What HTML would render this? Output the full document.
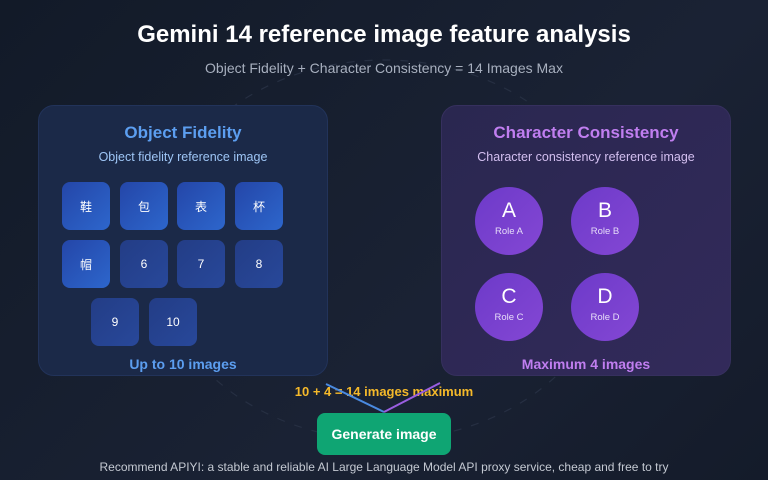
<!DOCTYPE html>
<html><head><meta charset="utf-8"><style>
*{margin:0;padding:0;box-sizing:border-box}
body{width:768px;height:480px;overflow:hidden;background:linear-gradient(135deg,#121a28,#1a2234 60%,#141b2a);font-family:"Liberation Sans","Noto Sans CJK SC",sans-serif;position:relative;color:#fff}
.a{position:absolute}
.t{left:0;width:768px;text-align:center}
.card{position:absolute;top:105px;width:290px;height:271px;border-radius:16px}
.sq{position:absolute;width:48px;height:48px;border-radius:8px;display:flex;align-items:center;justify-content:center;font-size:12px;color:#fff}
.f{background:linear-gradient(135deg,#2446a8,#2d66cc)}
.e{background:linear-gradient(135deg,#233d86,#28489a)}
.c{position:absolute;width:68px;height:68px;border-radius:50%;background:linear-gradient(135deg,#6d3ac9,#8447d4);text-align:center;color:#fff}
.c b{display:block;font-weight:normal;font-size:21px;margin-top:12px}
.c i{display:block;font-style:normal;font-size:9.5px;color:#e6dcf8;margin-top:3px}
</style></head><body>
<svg class="a" style="left:0;top:0" width="768" height="480">
<ellipse cx="384" cy="250" rx="230" ry="190" fill="none" stroke="#262f42" stroke-width="1.2" stroke-dasharray="8 10"/>
</svg>
<div class="card" style="left:38px;background:#1b2948;border:1px solid #22335a"></div>
<div class="card" style="left:441px;background:linear-gradient(135deg,#2a2750,#322a5a);border:1px solid #36305e"></div>
<div class="a t" style="top:21px;font-size:24px;font-weight:bold">Gemini 14 reference image feature analysis</div>
<div class="a t" style="top:60px;font-size:14px;color:#a8b0bf">Object Fidelity + Character Consistency = 14 Images Max</div>
<div class="a" style="left:38px;width:290px;text-align:center;top:123px;font-size:17px;font-weight:bold;color:#5c9ef0">Object Fidelity</div>
<div class="a" style="left:38px;width:290px;text-align:center;top:150px;font-size:12.5px;color:#9ec5f5">Object fidelity reference image</div>
<div class="sq f" style="left:62px;top:182px">鞋</div>
<div class="sq f" style="left:120px;top:182px">包</div>
<div class="sq f" style="left:177px;top:182px">表</div>
<div class="sq f" style="left:235px;top:182px">杯</div>
<div class="sq f" style="left:62px;top:240px">帽</div>
<div class="sq e" style="left:120px;top:240px">6</div>
<div class="sq e" style="left:177px;top:240px">7</div>
<div class="sq e" style="left:235px;top:240px">8</div>
<div class="sq e" style="left:91px;top:298px">9</div>
<div class="sq e" style="left:149px;top:298px">10</div>
<div class="a" style="left:38px;width:290px;text-align:center;top:356px;font-size:14px;font-weight:bold;color:#5c9ef0">Up to 10 images</div>
<div class="a" style="left:441px;width:290px;text-align:center;top:123px;font-size:17px;font-weight:bold;color:#c07ef0">Character Consistency</div>
<div class="a" style="left:441px;width:290px;text-align:center;top:150px;font-size:12.5px;color:#d3bff0">Character consistency reference image</div>
<div class="c" style="left:475px;top:187px"><b>A</b><i>Role A</i></div>
<div class="c" style="left:571px;top:187px"><b>B</b><i>Role B</i></div>
<div class="c" style="left:475px;top:273px"><b>C</b><i>Role C</i></div>
<div class="c" style="left:571px;top:273px"><b>D</b><i>Role D</i></div>
<div class="a" style="left:441px;width:290px;text-align:center;top:356px;font-size:14px;font-weight:bold;color:#c07ef0">Maximum 4 images</div>
<div class="a t" style="top:384px;font-size:13px;font-weight:bold;color:#f5b92a">10 + 4 = 14 images maximum</div>
<svg class="a" style="left:0;top:0" width="768" height="480">
<line x1="326" y1="384" x2="384" y2="412" stroke="#4a8ae0" stroke-width="2"/>
<line x1="384" y1="412" x2="440" y2="383" stroke="#9a5ee0" stroke-width="2"/>
</svg>
<div class="a" style="left:317px;top:413px;width:134px;height:42px;border-radius:8px;background:#0fa573;text-align:center;line-height:42px;font-size:14px;font-weight:bold">Generate image</div>
<div class="a t" style="top:460px;font-size:12px;color:#c4c9d2">Recommend APIYI: a stable and reliable AI Large Language Model API proxy service, cheap and free to try</div>
</body></html>
